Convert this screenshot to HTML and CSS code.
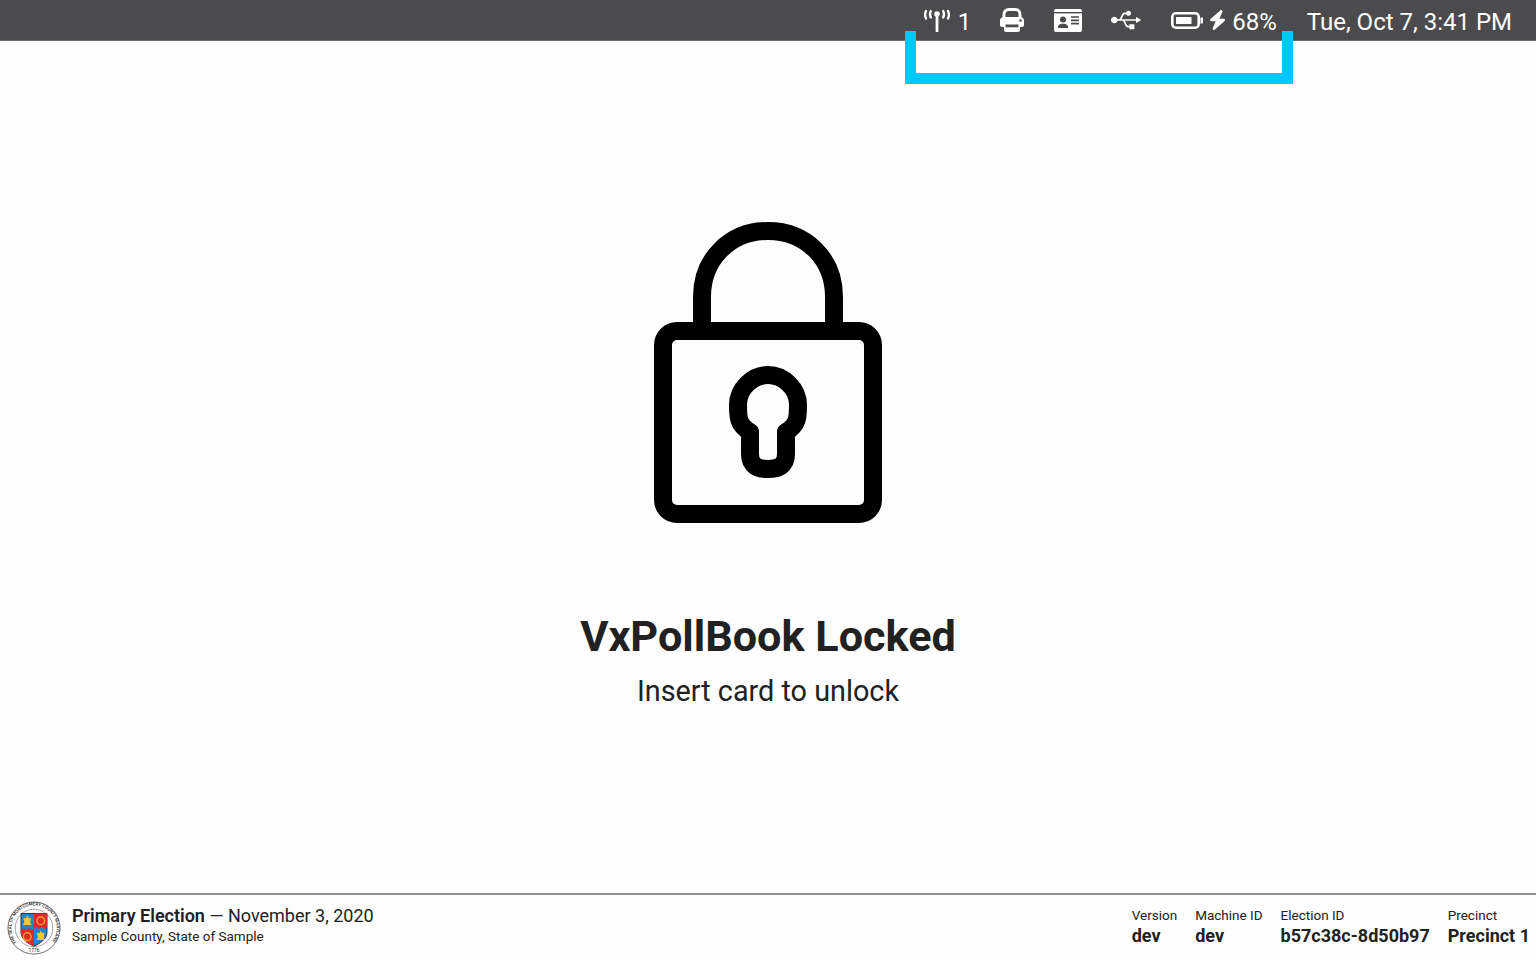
FILE: index.html
```html
<!DOCTYPE html>
<html lang="en">
<head>
    <meta charset="UTF-8">
    <meta name="viewport" content="width=device-width, initial-scale=1.0">
    <title>VxPollBook Locked</title>
    <link rel="stylesheet" href="styles.css">
</head>
<body>
    <header class="status-bar">
        <div class="status-item network">
            <svg class="icon" width="28" height="24" viewBox="0 0 28 24">
                <circle cx="14" cy="6" r="2.800" fill="#fff"/>
                <path d="M14 7V23" stroke="#fff" stroke-width="2.800" stroke-linecap="round" fill="none"/>
                <g stroke="#fff" stroke-width="2.300" stroke-linecap="round" fill="none">
                    <path d="M7.800 3C6.800 5 6.800 7.500 7.800 9.500"/>
                    <path d="M20.200 3C21.200 5 21.200 7.500 20.200 9.500"/>
                    <path d="M3 3C1.800 5.500 1.800 8 3 10.500"/>
                    <path d="M25 3C26.200 5.500 26.200 8 25 10.500"/>
                </g>
            </svg>
            <span class="status-text">1</span>
        </div>
        <svg class="icon printer" width="24" height="24" viewBox="0 0 24 24">
            <path d="M4 10V6.500C4 3.500 6 1.500 9 1.500H15C18 1.500 20 3.500 20 6.500V10" stroke="#fff" stroke-width="3" fill="none"/>
            <path d="M3.500 9H20.500C22.400 9 24 10.600 24 12.500V17C24 18 23 19 22 19H20V22C20 23.100 19.100 24 18 24H6C4.900 24 4 23.100 4 22V19H2C1 19 0 18 0 17V12.500C0 10.600 1.600 9 3.500 9Z" fill="#fff"/>
            <rect x="5.500" y="16.500" width="13" height="2.800" fill="#4b4b4e"/>
            <circle cx="20.500" cy="12.500" r="1.300" fill="#4b4b4e"/>
        </svg>
        <svg class="icon id-card" width="28" height="23" viewBox="0 0 28 23">
            <rect width="28" height="23" rx="2" fill="#fff"/>
            <rect y="3" width="28" height="1.400" fill="#4b4b4e"/>
            <circle cx="9" cy="10.500" r="3" fill="#4b4b4e"/>
            <path d="M3.800 19C3.800 16 6 14.800 9 14.800S14.200 16 14.200 19Z" fill="#4b4b4e"/>
            <path d="M17 8H25M17 11.300H25M17 14.600H25" stroke="#4b4b4e" stroke-width="1.700"/>
        </svg>
        <svg class="icon usb" width="30" height="24" viewBox="0 0 640 512">
            <path fill="#fff" d="M641.5 256c0 3.100-1.700 6.100-4.300 7.500L547.900 317c-1.400.8-2.800 1.400-4.500 1.400-1.400 0-3.100-.3-4.500-1.100-2.800-1.700-4.500-4.500-4.500-7.800v-35.600H295.700c25.300 39.600 40.500 106.900 69.600 106.900H392V354c0-5 3.900-8.900 8.900-8.900H490c5 0 8.900 3.900 8.900 8.900v89.100c0 5-3.900 8.900-8.900 8.900h-89.100c-5 0-8.900-3.900-8.900-8.900v-26.700h-26.700c-75.400 0-81.100-142.500-124.700-142.500H140.300c-8.100 30.600-35.900 53.500-69 53.500C32 327.300 0 295.300 0 256s32-71.300 71.300-71.300c33.100 0 61 22.800 69 53.500 39.100 0 43.900 9.500 74.600-60.400C255 88.700 273 95.700 323.800 95.700c7.500-20.900 27-35.600 50.400-35.600 29.500 0 53.500 23.900 53.500 53.500s-23.900 53.500-53.500 53.500c-23.400 0-42.900-14.800-50.400-35.600H294c-29.100 0-44.300 67.400-69.600 106.900h310.100v-35.600c0-3.300 1.700-6.100 4.500-7.800 2.800-1.700 6.400-1.400 8.900.3l89.100 53.500c2.800 1.100 4.500 4.100 4.500 7.200z"/>
        </svg>
        <div class="status-item battery">
            <svg class="icon" width="32" height="17" viewBox="0 0 32 17">
                <rect x="1.300" y="1.300" width="26.400" height="14.400" rx="3.500" stroke="#fff" stroke-width="2.600" fill="none"/>
                <rect x="5" y="5" width="15.500" height="7" rx="0.500" fill="#fff"/>
                <path d="M29.500 5.500H31C31.600 5.500 32 5.900 32 6.500V10.500C32 11.100 31.600 11.500 31 11.500H29.500Z" fill="#fff"/>
            </svg>
            <svg class="icon" width="15" height="20" viewBox="30 0 385 512" preserveAspectRatio="none">
                <path fill="#fff" d="M349.400 44.600c5.900-13.700 1.500-29.700-10.600-38.500s-28.600-8-39.900 1.800l-256 224c-10 8.800-13.600 22.900-8.900 35.300S50.700 288 64 288H175.500L98.600 467.400c-5.900 13.700-1.500 29.700 10.600 38.500s28.600 8 39.900-1.800l256-224c10-8.800 13.600-22.900 8.900-35.300s-16.600-20.700-30-20.700H272.500L349.400 44.600z"/>
            </svg>
            <span class="status-text">68%</span>
        </div>
        <div class="status-text clock">Tue, Oct 7, 3:41 PM</div>
        <div class="highlight-bracket"></div>
    </header>

    <main class="locked-screen">
        <svg class="lock-icon" width="228" height="302" viewBox="0 0 228 302">
            <g fill="none" stroke="#000" stroke-width="18">
                <path d="M48 110V76C48 38 76 10 114 10S180 38 180 76V110"/>
                <rect x="9" y="110" width="210" height="183" rx="14"/>
                <path stroke-linejoin="round" d="M96 211C84 204 84 196 84 184C84 168 98 154 114 154S144 168 144 184C144 196 144 204 132 211V233C132 245 124 248 114 248S96 245 96 233Z"/>
            </g>
        </svg>
        <h1 class="title">VxPollBook Locked</h1>
        <p class="subtitle">Insert card to unlock</p>
    </main>

    <footer class="election-bar">
        <div class="election-info">
            <svg class="seal" width="54" height="54" viewBox="0 0 56 56">
                <defs>
                    <path id="sealRing" d="M10 43A23.430 23.430 0 1 1 46 43"/>
                </defs>
                <circle cx="28" cy="28" r="27" fill="#fff" stroke="#333" stroke-width="0.700"/>
                <circle cx="28" cy="28" r="19.500" fill="none" stroke="#666" stroke-width="0.600"/>
                <text class="seal-text" textLength="104" lengthAdjust="spacingAndGlyphs"><textPath href="#sealRing">THE SEAL OF MONTGOMERY COUNTY MARYLAND</textPath></text>
                <text class="seal-year" x="28" y="53" text-anchor="middle">1776</text>
                <path d="M14.500 13H41.500V32C41.500 40 34 44 28 47C22 44 14.500 40 14.500 32Z" fill="#1f86c9" stroke="#222" stroke-width="0.900"/>
                <path d="M28 13H41.500V27L38.500 29L36 27L33 29L30.500 27L28 29Z" fill="#e02a2a"/>
                <path d="M14.500 30L17 28L20 30L22.500 28L25 30L28 28V47C22 44 14.500 40 14.500 32Z" fill="#e02a2a"/>
                <circle cx="35" cy="20.500" r="4" fill="none" stroke="#e8a31c" stroke-width="1.500"/>
                <circle cx="21" cy="37" r="4" fill="none" stroke="#e8a31c" stroke-width="1.500"/>
                <path d="M21 15L22.500 18L25 17.500L24 22L25.500 25H16.500L18 22L17 17.500L19.500 18Z" fill="#edc53a"/>
                <path d="M35 30.500L36.500 33.500L39 33L38 37.500L39.500 40.500H30.500L32 37.500L31 33L33.500 33.500Z" fill="#edc53a"/>
            </svg>
            <div class="election-text">
                <div class="election-name"><strong>Primary Election</strong> — November 3, 2020</div>
                <div class="election-place">Sample County, State of Sample</div>
            </div>
        </div>
        <div class="meta-list">
            <div class="meta-item"><div class="meta-label">Version</div><div class="meta-value">dev</div></div>
            <div class="meta-item"><div class="meta-label">Machine ID</div><div class="meta-value">dev</div></div>
            <div class="meta-item"><div class="meta-label">Election ID</div><div class="meta-value">b57c38c-8d50b97</div></div>
            <div class="meta-item"><div class="meta-label">Precinct</div><div class="meta-value">Precinct 1</div></div>
        </div>
    </footer>
</body>
</html>
```

FILE: styles.css
```css
* {
    box-sizing: border-box;
}

body {
    font-family: Roboto, "Liberation Sans", sans-serif;
    margin: 0;
    height: 960px;
    display: flex;
    flex-direction: column;
    background-color: #fdfdfd;
    color: #212121;
    overflow: hidden;
}

.status-bar {
    position: relative;
    height: 41px;
    flex-shrink: 0;
    display: flex;
    justify-content: flex-end;
    align-items: center;
    gap: 30px;
    padding-right: 24px;
    background-color: #4b4b4e;
    border-bottom: 1px solid #6e6e70;
    color: #fff;
    font-size: 24px;
    font-weight: 400;
}

.status-item {
    display: flex;
    align-items: center;
}

.status-text {
    padding-top: 3px;
}

.icon {
    display: block;
}

.network {
    gap: 7px;
    margin-right: -1px;
}

.id-card {
    margin-right: -1px;
}

.battery {
    gap: 7px;
}

.highlight-bracket {
    position: absolute;
    left: 905px;
    top: 31px;
    width: 388px;
    height: 53px;
    border: solid #00c8ff;
    border-width: 0 11px 11px 11px;
}

.locked-screen {
    flex: 1;
    display: flex;
    flex-direction: column;
    align-items: center;
    justify-content: center;
    padding-top: 2px;
}

.lock-icon {
    display: block;
    margin-bottom: 84px;
}

.title {
    margin: 0;
    font-size: 43.2px;
    line-height: 60px;
    font-weight: 700;
}

.subtitle {
    margin: 0;
    font-size: 28.8px;
    line-height: 48px;
    font-weight: 400;
}

.election-bar {
    height: 67px;
    flex-shrink: 0;
    display: flex;
    justify-content: space-between;
    align-items: center;
    padding: 0 6px 0 7px;
    border-top: 2px solid #8e8e8e;
}

.election-info {
    display: flex;
    align-items: center;
    gap: 11px;
}

.election-text {
    padding-bottom: 6px;
}

.seal {
    display: block;
}

.seal-text {
    font-size: 4.6px;
    font-weight: 500;
    fill: #222;
}

.seal-year {
    font-size: 5px;
    fill: #222;
}

.election-name {
    font-size: 18px;
    line-height: 24px;
    font-weight: 400;
}

.election-name strong {
    font-weight: 600;
}

.election-place {
    font-size: 13.5px;
    line-height: 17px;
}

.meta-list {
    display: flex;
    gap: 18px;
}

.meta-label {
    font-size: 13.5px;
    line-height: 17px;
    font-weight: 400;
}

.meta-value {
    font-size: 18px;
    line-height: 24px;
    font-weight: 700;
}
```
